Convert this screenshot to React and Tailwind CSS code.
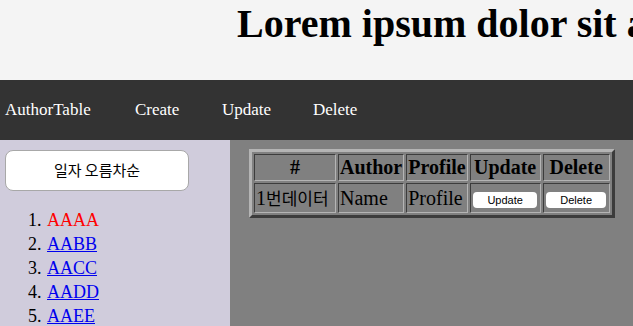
export default function App() {
  const serif = { fontFamily: '"Liberation Serif", "Noto Sans CJK KR", serif' };
  const items = ["AAAA", "AABB", "AACC", "AADD", "AAEE"];
  const th =
    "border border-t-[#3c3c3c] border-l-[#3c3c3c] border-b-[#b4b4b4] border-r-[#b4b4b4] px-[1px] py-[1px] font-bold text-[20px] leading-[23px] text-black text-center";
  const td =
    "border border-t-[#3c3c3c] border-l-[#3c3c3c] border-b-[#b4b4b4] border-r-[#b4b4b4] px-[1px] text-[20px] leading-[27px] text-black";
  return (
    <div className="w-[633px] h-[326px] overflow-hidden" style={serif}>
      <header className="h-[80px] bg-[#f4f4f4] overflow-hidden">
        <h1
          className="pl-[237px] pt-[1px] whitespace-nowrap text-[40px] font-bold leading-[46px] text-black"
          style={serif}
        >
          Lorem ipsum dolor sit amet
        </h1>
      </header>
      <nav className="h-[60px] bg-[#333333] flex items-center pl-[5px] text-white text-[17px]">
        <a className="w-[130px]">AuthorTable</a>
        <a className="w-[87px]">Create</a>
        <a className="w-[91px]">Update</a>
        <a>Delete</a>
      </nav>
      <div className="flex h-[186px]">
        <aside className="w-[230px] bg-[#d0ccdc] pt-[10px] pl-[5px]">
          <button
            className="block w-[184px] h-[41px] bg-white border border-[#a8a8a8] rounded-[8px] text-[15px] text-black"
            style={{ fontFamily: '"Noto Sans CJK KR", sans-serif' }}
          >
            일자 오름차순
          </button>
          <ol className="list-decimal mt-[17px] pl-[41px] text-[18px] leading-[24px]">
            {items.map((t, i) => (
              <li key={t} className="pl-[1px]">
                <a
                  className={i === 0 ? "text-[#ff0000]" : "text-[#0000ee] underline"}
                >
                  {t}
                </a>
              </li>
            ))}
          </ol>
        </aside>
        <main className="flex-1 bg-[#808080] pt-[9px] pl-[19px]">
          <table
            className="border-separate border-spacing-[2px] border-[3px] border-t-[#b4b4b4] border-l-[#b4b4b4] border-b-[#3c3c3c] border-r-[#3c3c3c]"
          >
            <thead>
              <tr>
                <th className={th + " w-[82px]"}>#</th>
                <th className={th}>Author</th>
                <th className={th}>Profile</th>
                <th className={th + " w-[71px]"}>Update</th>
                <th className={th + " w-[67px]"}>Delete</th>
              </tr>
            </thead>
            <tbody>
              <tr>
                <td className={td}>
                  1<span className="text-[17px]" style={{ fontFamily: '"Noto Sans CJK KR", sans-serif' }}>번데이터</span>
                </td>
                <td className={td}>Name</td>
                <td className={td}>Profile</td>
                <td className={td + " text-center"}>
                  <button
                    className="w-[64px] h-[16px] bg-white rounded-[4px] text-[11px] leading-[16px] text-black align-middle"
                    style={{ fontFamily: '"Liberation Sans", sans-serif' }}
                  >
                    Update
                  </button>
                </td>
                <td className={td + " text-center"}>
                  <button
                    className="w-[60px] h-[16px] bg-white rounded-[4px] text-[11px] leading-[16px] text-black align-middle"
                    style={{ fontFamily: '"Liberation Sans", sans-serif' }}
                  >
                    Delete
                  </button>
                </td>
              </tr>
            </tbody>
          </table>
        </main>
      </div>
    </div>
  );
}
